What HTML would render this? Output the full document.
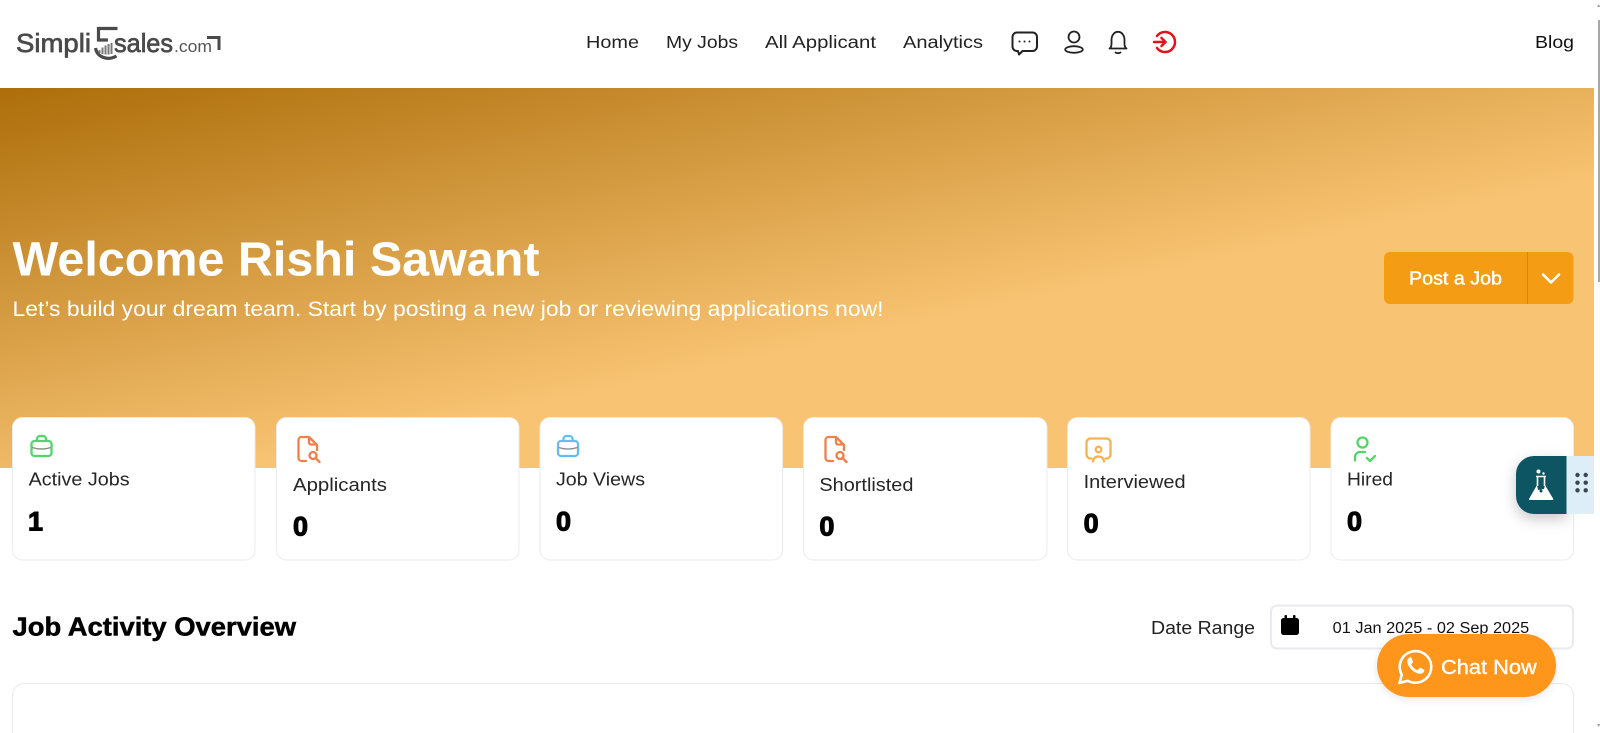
<!DOCTYPE html>
<html lang="en">
<head>
<meta charset="utf-8">
<title>Simpli5sales Dashboard</title>
<style>
html,body{margin:0;padding:0;width:1600px;height:733px;overflow:hidden;background:#fff}
svg{display:block}
text{font-family:"Liberation Sans",Arial,sans-serif}
.nav{font-size:17.5px;fill:#222}
.label{font-size:18px;fill:#262626}
.num{font-size:27px;font-weight:700;fill:#000;stroke:#000;stroke-width:1.100px}
.ic{fill:none;stroke-width:2.300;stroke-linecap:round;stroke-linejoin:round}
.top{fill:none;stroke-width:1.800;stroke-linecap:round;stroke-linejoin:round}
.card{fill:#fff;stroke:#e9ebef;stroke-width:1}
</style>
</head>
<body>
<svg width="1600" height="733" viewBox="0 0 1600 733" xmlns="http://www.w3.org/2000/svg">
<defs>
<linearGradient id="hero" gradientUnits="userSpaceOnUse" x1="0" y1="88" x2="146" y2="775">
<stop offset="0" stop-color="#ad6e0a"/>
<stop offset=".6" stop-color="#f8c372"/>
<stop offset="1" stop-color="#f8c372"/>
</linearGradient>
<filter id="sh" x="-30%" y="-30%" width="160%" height="170%"><feDropShadow dx="0" dy="5" stdDeviation="7" flood-color="#000" flood-opacity=".22"/></filter>
<filter id="sh2" x="-10%" y="-20%" width="120%" height="150%"><feDropShadow dx="0" dy="2" stdDeviation="4" flood-color="#000" flood-opacity=".1"/></filter>
</defs>

<rect width="1600" height="733" fill="#fff"/>

<!-- Hero -->
<rect x="0" y="88" width="1594" height="380" fill="url(#hero)"/>
<text x="12.500" y="275.500" font-size="48" font-weight="700" fill="#fff" textLength="527" lengthAdjust="spacingAndGlyphs">Welcome Rishi Sawant</text>
<text x="12.500" y="316" font-size="21" fill="#fff" textLength="871" lengthAdjust="spacingAndGlyphs">Let’s build your dream team. Start by posting a new job or reviewing applications now!</text>

<!-- Post a job -->
<rect x="1384" y="252" width="189.500" height="52" rx="6" fill="#f49c14"/>
<rect x="1527" y="252" width="1" height="52" fill="#b98a3c"/>
<text x="1409" y="284.500" font-size="18" fill="#fff" stroke="#fff" stroke-width=".45" textLength="93" lengthAdjust="spacingAndGlyphs">Post a Job</text>
<path d="M1543 274.500l8 8 8-8" fill="none" stroke="#fff" stroke-width="2.600" stroke-linecap="round" stroke-linejoin="round"/>

<!-- Header -->
<g>
<text x="16" y="52" font-size="26" fill="#4a4a4a" stroke="#4a4a4a" stroke-width=".7" textLength="75" lengthAdjust="spacingAndGlyphs">Simpli</text>
<path d="M117.500 28.500H98.500V40H108" fill="none" stroke="#4a4a4a" stroke-width="3.200"/>
<path d="M95.500 48C97 57.500 108 61 116.500 56" fill="none" stroke="#4a4a4a" stroke-width="3.200"/>
<path d="M99.500 50v3M102.500 47.500v6.500M105.500 45.500v9M108.500 44v10.500M111.500 43v11" stroke="#7a7a7a" stroke-width="2"/>
<text x="114" y="52" font-size="26" fill="#4a4a4a" stroke="#4a4a4a" stroke-width=".7" textLength="59" lengthAdjust="spacingAndGlyphs">sales</text>
<text x="174" y="52" font-size="17" fill="#555" textLength="38" lengthAdjust="spacingAndGlyphs">.com</text>
<path d="M207 37.500H219V50" fill="none" stroke="#4a4a4a" stroke-width="3"/>

<text class="nav" x="586" y="48" textLength="53" lengthAdjust="spacingAndGlyphs">Home</text>
<text class="nav" x="666" y="48" textLength="72" lengthAdjust="spacingAndGlyphs">My Jobs</text>
<text class="nav" x="765" y="48" textLength="111" lengthAdjust="spacingAndGlyphs">All Applicant</text>
<text class="nav" x="903" y="48" textLength="80" lengthAdjust="spacingAndGlyphs">Analytics</text>
<text class="nav" x="1535" y="48" textLength="39" lengthAdjust="spacingAndGlyphs" style="fill:#111">Blog</text>

<!-- chat -->
<path class="top" stroke="#222" d="M1017 32.500h15.500a4.500 4.500 0 0 1 4.500 4.500v9.500a4.500 4.500 0 0 1-4.500 4.500h-10l-3.500 3.500-1-3.500h-1a4.500 4.500 0 0 1-4.500-4.500V37a4.500 4.500 0 0 1 4.500-4.500z" style="stroke-width:2"/>
<g fill="#222"><circle cx="1019.500" cy="41.500" r="1"/><circle cx="1024.500" cy="41.500" r="1"/><circle cx="1029.500" cy="41.500" r="1"/></g>
<!-- user -->
<g class="top" stroke="#222"><circle cx="1074" cy="37" r="5.500"/><ellipse cx="1074" cy="49.500" rx="8.800" ry="3.300"/></g>
<!-- bell -->
<path class="top" stroke="#222" d="M1109.500 48.500c2.500-1.500 2-5 2-8.500 0-5 3-8.200 6.500-8.200s6.500 3.200 6.500 8.200c0 3.500-.5 7 2 8.500z"/>
<path class="top" stroke="#222" d="M1115.500 52.500c1.500.8 3.500.8 5 0"/>
<!-- logout -->
<g class="ic" stroke="#e8101c" style="stroke-width:2.500"><path d="M1157 36a10 10 0 1 1 0 12"/><path d="M1154 42h11.500"/><path d="M1161.500 38l4 4-4 4"/></g>
</g>

<!-- Stat cards -->
<rect class="card" x="12.500" y="417.500" width="242.500" height="142.500" rx="10"/>
<rect class="card" x="276.500" y="417.500" width="242.500" height="142.500" rx="10"/>
<rect class="card" x="540" y="417.500" width="242.500" height="142.500" rx="10"/>
<rect class="card" x="803.500" y="417.500" width="243.500" height="142.500" rx="10"/>
<rect class="card" x="1067.500" y="417.500" width="242.500" height="142.500" rx="10"/>
<rect class="card" x="1331" y="417.500" width="242.500" height="142.500" rx="10"/>

<!-- briefcase green -->
<g class="ic" stroke="#4fd866"><rect x="31.500" y="441" width="20" height="15" rx="3"/><path d="M37 441v-2a3 3 0 0 1 3-3h3a3 3 0 0 1 3 3v2"/></g>
<path d="M32 447.500q9.500 3 19 0" fill="none" stroke="#8a8a8a" stroke-width="1.300"/><circle cx="41.500" cy="449" r="1" fill="#4fd866"/>
<text class="label" x="28.600" y="485.700" textLength="101" lengthAdjust="spacingAndGlyphs">Active Jobs</text>
<text class="num" x="28" y="530.500">1</text>

<!-- doc -->
<g class="ic" stroke="#f0804a"><path d="M306 461h-4.500a3 3 0 0 1-3-3v-18a3 3 0 0 1 3-3h7.500l8 8v5"/><path d="M309 437.500v5a2 2 0 0 0 2 2h5.500"/><circle cx="313" cy="455.500" r="3.500"/><path d="M316 458.500l3.500 3.500"/></g>
<text class="label" x="293" y="491" textLength="94" lengthAdjust="spacingAndGlyphs">Applicants</text>
<text class="num" x="293" y="535.500">0</text>

<!-- briefcase blue -->
<g class="ic" stroke="#62bff5"><rect x="558" y="441" width="20" height="15" rx="3"/><path d="M563.500 441v-2a3 3 0 0 1 3-3h3a3 3 0 0 1 3 3v2"/></g>
<path d="M558.500 447.500q9.500 3 19 0" fill="none" stroke="#8a8a8a" stroke-width="1.300"/><circle cx="568" cy="449" r="1" fill="#62bff5"/>
<text class="label" x="556" y="485.700" textLength="89" lengthAdjust="spacingAndGlyphs">Job Views</text>
<text class="num" x="556" y="530.500">0</text>

<!-- doc 2 -->
<g class="ic" stroke="#f0804a"><path d="M833 461h-4.500a3 3 0 0 1-3-3v-18a3 3 0 0 1 3-3h7.500l8 8v5"/><path d="M836 437.500v5a2 2 0 0 0 2 2h5.500"/><circle cx="840" cy="455.500" r="3.500"/><path d="M843 458.500l3.500 3.500"/></g>
<text class="label" x="819.400" y="491" textLength="94" lengthAdjust="spacingAndGlyphs">Shortlisted</text>
<text class="num" x="819.400" y="535.500">0</text>

<!-- interview -->
<g class="ic" stroke="#f6b24e"><path d="M1091.500 458.500h-1a4 4 0 0 1-4-4v-12a4 4 0 0 1 4-4h16a4 4 0 0 1 4 4v12a4 4 0 0 1-4 4h-1"/><circle cx="1098.500" cy="449.500" r="2.800"/><path d="M1093 461.500c.5-3 2-5 5.500-5s5 2 5.500 5"/></g>
<text class="label" x="1083.600" y="488" textLength="102" lengthAdjust="spacingAndGlyphs">Interviewed</text>
<text class="num" x="1083.600" y="532.500">0</text>

<!-- hired -->
<g class="ic" stroke="#4fd866"><circle cx="1362.500" cy="442.500" r="5"/><path d="M1355 460.500v-3.500a5 5 0 0 1 5-5h5"/><path d="M1367 458l3 3 5-5"/></g>
<text class="label" x="1347" y="485.700" textLength="46" lengthAdjust="spacingAndGlyphs">Hired</text>
<text class="num" x="1347" y="530.500">0</text>

<!-- Floating lab widget -->
<g filter="url(#sh)">
<path d="M1566.500 456H1534a18 18 0 0 0-18 18v22a18 18 0 0 0 18 18h32.500z" fill="#0f5463"/>
</g>
<rect x="1566.500" y="456" width="27.500" height="58" fill="#deeef8"/>
<g fill="#3a4550"><circle cx="1577.500" cy="475" r="2.200"/><circle cx="1585.700" cy="475" r="2.200"/><circle cx="1577.500" cy="482.700" r="2.200"/><circle cx="1585.700" cy="482.700" r="2.200"/><circle cx="1577.500" cy="490.300" r="2.200"/><circle cx="1585.700" cy="490.300" r="2.200"/></g>
<circle cx="1538.500" cy="471.500" r="2" fill="#fff"/><circle cx="1543.500" cy="473.500" r="1.200" fill="#fff"/>
<path d="M1536 476.500h10M1537.500 477v9M1544.500 477v9" stroke="#fff" stroke-width="1.600" fill="none"/>
<path d="M1537 485L1529 499a.8.8 0 0 0 .7 1H1552.600a.8.8 0 0 0 .7-1L1545 485l-1 4-6 1z" fill="#fff"/>
<circle cx="1541" cy="491" r="1.500" fill="#0f5463"/>

<!-- Job activity -->
<text x="12.500" y="635.500" font-size="26" font-weight="700" fill="#000" stroke="#000" stroke-width=".5" textLength="283.500" lengthAdjust="spacingAndGlyphs">Job Activity Overview</text>
<text x="1151" y="634" font-size="18" fill="#222" textLength="104" lengthAdjust="spacingAndGlyphs">Date Range</text>
<rect x="1271" y="605.500" width="302" height="43" rx="6" fill="#fff" stroke="#e9eaef" stroke-width="2"/>
<path d="M1283.500 618h13a2.500 2.500 0 0 1 2.500 2.500V632.500a2.500 2.500 0 0 1-2.500 2.500h-13a2.500 2.500 0 0 1-2.500-2.500V620.500a2.500 2.500 0 0 1 2.500-2.500z" fill="#000"/>
<rect x="1284.500" y="615" width="2.500" height="4" rx="1" fill="#000"/><rect x="1293" y="615" width="2.500" height="4" rx="1" fill="#000"/>
<text x="1332.700" y="633" font-size="15.500" fill="#111" textLength="196.500" lengthAdjust="spacingAndGlyphs">01 Jan 2025 - 02 Sep 2025</text>

<!-- Chart card -->
<rect x="12.500" y="683.500" width="1561" height="80" rx="12" fill="#fff" stroke="#e8eaee"/>

<!-- Chat now -->
<rect x="1377" y="634" width="179" height="63" rx="31.500" fill="#ff961e" filter="url(#sh2)"/>
<g fill="none" stroke="#fff" stroke-width="2.600" stroke-linejoin="round"><path d="M1399.500 683l2.300-8.200a15.800 15.800 0 1 1 6 5.900z"/></g>
<path d="M1409.500 657.500c-1.200.6-2.200 2-2.200 3.800 0 5.500 7 12.500 13 12.500 1.800 0 3.200-1 3.800-2.300.3-.8.300-1.500.1-1.800l-3.900-1.900c-.4-.1-.7 0-1 .4l-1.300 1.700c-.3.300-.6.400-1 .2-2.300-.9-4.500-3-5.600-5.300-.2-.4-.1-.7.200-1l1.200-1.300c.2-.3.300-.6.100-1l-1.600-3.700c-.3-.6-.6-.7-1.900-.3z" fill="#fff"/>
<text x="1441" y="674" font-size="20" fill="#fff" fill-opacity=".95" stroke="#fff" stroke-width=".4" textLength="95.700" lengthAdjust="spacingAndGlyphs">Chat Now</text>

<!-- Scrollbar -->
<rect x="1598" y="20" width="2" height="262" fill="#a8a8a8"/>
<path d="M1599 4l-2 3h3z" fill="#999"/>
<path d="M1599 727l-2-3h3z" fill="#999"/>
</svg>
</body>
</html>
